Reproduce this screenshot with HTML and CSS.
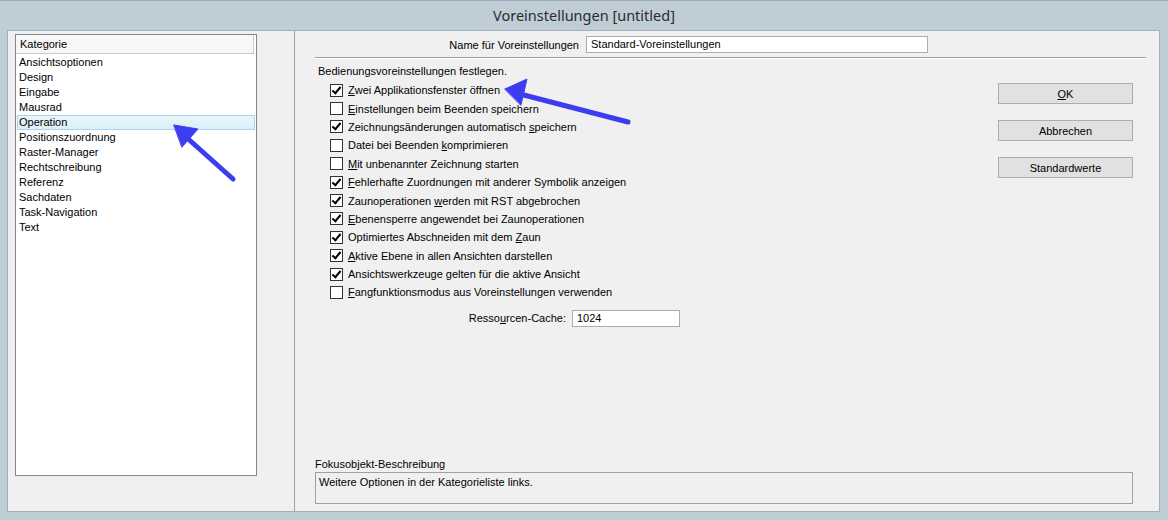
FILE: index.html
```html
<!DOCTYPE html>
<html lang="de">
<head>
    <meta charset="UTF-8">
    <title>Voreinstellungen [untitled]</title>
    <link rel="stylesheet" href="styles.css">
</head>
<body>
<div class="window">
    <div class="titlebar">Voreinstellungen [untitled]</div>
    <div class="client">
        <div class="left-pane">
            <div class="listbox">
                <div class="list-header"><span>Kategorie</span></div>
                <div class="item">Ansichtsoptionen</div>
                <div class="item">Design</div>
                <div class="item">Eingabe</div>
                <div class="item">Mausrad</div>
                <div class="item selected">Operation</div>
                <div class="item">Positionszuordnung</div>
                <div class="item">Raster-Manager</div>
                <div class="item">Rechtschreibung</div>
                <div class="item">Referenz</div>
                <div class="item">Sachdaten</div>
                <div class="item">Task-Navigation</div>
                <div class="item">Text</div>
            </div>
        </div>

        <div class="right-pane">
            <div class="name-row">
                <label class="name-label">Name für Voreinstellungen</label>
                <div class="textbox name-box">Standard-Voreinstellungen</div>
            </div>
            <div class="separator"></div>

            <div class="main">
                <div class="options">
                    <div class="heading">Bedienungsvoreinstellungen festlegen.</div>
                    <div class="check"><span class="cb on"></span><span><u>Z</u>wei Applikationsfenster öffnen</span></div>
                    <div class="check"><span class="cb"></span><span><u>E</u>instellungen beim Beenden speichern</span></div>
                    <div class="check"><span class="cb on"></span><span>Zeichnungsänderungen automatisch <u>s</u>peichern</span></div>
                    <div class="check"><span class="cb"></span><span>Datei bei Beenden <u>k</u>omprimieren</span></div>
                    <div class="check"><span class="cb"></span><span><u>M</u>it unbenannter Zeichnung starten</span></div>
                    <div class="check"><span class="cb on"></span><span><u>F</u>ehlerhafte Zuordnungen mit anderer Symbolik anzeigen</span></div>
                    <div class="check"><span class="cb on"></span><span>Zaunoperationen <u>w</u>erden mit RST abgebrochen</span></div>
                    <div class="check"><span class="cb on"></span><span><u>E</u>benensperre angewendet bei Zaunoperationen</span></div>
                    <div class="check"><span class="cb on"></span><span>Optimiertes Abschneiden mit dem <u>Z</u>aun</span></div>
                    <div class="check"><span class="cb on"></span><span><u>A</u>ktive Ebene in allen Ansichten darstellen</span></div>
                    <div class="check"><span class="cb on"></span><span>Ansichtswerkzeuge gelten für die aktive Ansicht</span></div>
                    <div class="check"><span class="cb"></span><span><u>F</u>angfunktionsmodus aus Voreinstellungen verwenden</span></div>

                    <div class="cache-row">
                        <label class="cache-label">Resso<u>u</u>rcen-Cache:</label>
                        <div class="textbox cache-box">1024</div>
                    </div>
                </div>

                <div class="buttons">
                    <button><u>O</u>K</button>
                    <button>Abbrechen</button>
                    <button>Standardwerte</button>
                </div>
            </div>

            <div class="focus">
                <div class="focus-label">Fokusobjekt-Beschreibung</div>
                <div class="focus-box">Weitere Optionen in der Kategorieliste links.</div>
            </div>
        </div>
    </div>

    <!-- annotation arrows drawn over the dialog -->
    <svg class="arrows" width="1168" height="520" viewBox="0 0 1168 520">
        <g fill="#3c3cf0" stroke="#3c3cf0" stroke-width="5" stroke-linecap="round">
            <line x1="233" y1="178" x2="186" y2="136"/>
            <polygon stroke-width="1" stroke-linejoin="round" points="174,124 198,128 182,146"/>
            <line x1="628" y1="121" x2="520" y2="93"/>
            <polygon stroke-width="1" stroke-linejoin="round" points="505,88 527,78 521,104"/>
        </g>
    </svg>
</div>
</body>
</html>
```

FILE: styles.css
```css
* { box-sizing: border-box; }
body { margin: 0; background: #bfcdd6; font-family: "Liberation Sans", Arial, sans-serif; font-size: 11px; color: #000; }

.window { position: relative; width: 1168px; height: 520px; background: #bfcdd6; border-top: 1px solid #9aa9b3; display: flex; flex-direction: column; }
.titlebar { height: 29px; line-height: 29px; text-align: center; font-family: "Noto Sans", "Open Sans", sans-serif; font-size: 14.5px; color: #2b2b2b; }
.client { flex: 1; margin: 0 8px 8px 7px; background: #f0f0f0; border: 1px solid #a3b0b8; display: flex; }

.left-pane { width: 287px; border-right: 1px solid #a0a0a0; padding: 3px 0 0 7px; }
.listbox { width: 242px; height: 442px; border: 1px solid #828790; background: #fff; }
.list-header { height: 19px; padding-right: 2px; margin-bottom: 1px; }
.list-header span { display: block; height: 19px; line-height: 18px; padding-left: 4px; background: #f7f7f7; border-bottom: 1px solid #c9c9c9; border-right: 1px solid #c9c9c9; }
.item { height: 15px; line-height: 15px; padding-left: 2px; margin: 0 1px; }
.item.selected { background: linear-gradient(#eaf5fc, #dceff9); border: 1px solid #a6d6f1; line-height: 13px; padding-left: 1px; }

.right-pane { flex: 1; padding: 5px 13px 7px 20px; display: flex; flex-direction: column; }
.name-row { display: flex; align-items: center; gap: 7px; }
.name-label { width: 264px; text-align: right; }
.textbox { height: 17px; line-height: 15px; padding-left: 4px; background: #fff; border: 1px solid #acacac; }
.name-box { width: 342px; }
.separator { height: 2px; border-top: 1px solid #a0a0a0; border-bottom: 1px solid #fff; margin-top: 4px; }

.main { display: flex; justify-content: space-between; }
.options { padding-left: 3px; }
.heading { margin-top: 5px; height: 15px; line-height: 15px; }
.check { display: flex; align-items: center; height: 18.4px; padding-left: 12px; gap: 5px; }
.heading + .check { margin-top: 2px; }
.cb { width: 13px; height: 13px; border: 1px solid #333; background: #fff; position: relative; flex: none; }
.cb.on::after { content: ""; position: absolute; left: 3px; top: 0px; width: 3px; height: 7px; border-right: 2px solid #000; border-bottom: 2px solid #000; transform: rotate(40deg); }

.cache-row { display: flex; align-items: center; gap: 6px; margin-top: 8px; }
.cache-label { width: 248px; text-align: right; }
.cache-box { width: 108px; }

.buttons { display: flex; flex-direction: column; gap: 16px; margin-top: 24px; margin-right: 13px; }
button { width: 135px; height: 21px; font-family: inherit; font-size: 11px; color: #000; background: #e1e1e1; border: 1px solid #adadad; padding: 0; }

.focus { margin-top: auto; }
.focus-label { height: 15px; line-height: 15px; }
.focus-box { height: 32px; width: 818px; border: 1px solid #a0a0a0; padding: 2px 3px; line-height: 15px; }

.arrows { position: absolute; left: 0; top: 0; pointer-events: none; }
```
